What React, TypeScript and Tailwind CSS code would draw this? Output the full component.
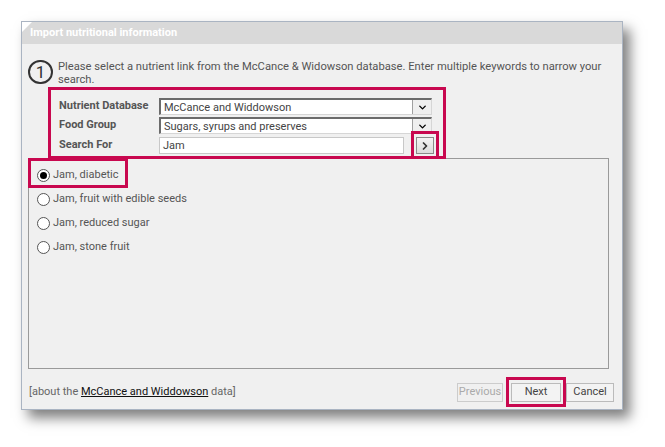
import { ChevronDown, ChevronRight } from "lucide-react";

const items = [
  "Jam, diabetic",
  "Jam, fruit with edible seeds",
  "Jam, reduced sugar",
  "Jam, stone fruit",
];

const SelectBox = ({ value }: { value: string }) => (
  <div className="flex h-[17px] w-[273px] border-l-2 border-t-2 border-b border-r border-l-[#6b6b6b] border-t-[#6b6b6b] border-b-[#d6d6d6] border-r-[#d6d6d6] bg-white">
    <span className="flex-1 truncate pl-[3px] leading-[15px] text-[#444]">{value}</span>
    <span className="flex w-[19px] items-center justify-center border-l border-[#a0a0a0] bg-[#efefef]">
      <ChevronDown className="h-[11px] w-[11px] text-black" strokeWidth={3} />
    </span>
  </div>
);

export default function App() {
  return (
    <div className="min-h-screen bg-white pl-[21px] pt-[21px] font-['Roboto',sans-serif] text-[11px]">
      <div className="relative flex h-[389px] w-[602px] flex-col border border-[#aab4c2] bg-[#f0f0f0] shadow-[7px_8px_12px_rgba(0,0,0,0.5)]">
        <div className="absolute left-0 top-0 h-0 w-0 border-l-[5px] border-t-[5px] border-l-white border-t-white border-r-[5px] border-b-[5px] border-r-transparent border-b-transparent" />
        <div className="h-[22px] bg-[#d9d9d9] pl-[8px] font-bold leading-[22px] text-white">Import nutritional information</div>

        <div className="flex flex-1 flex-col px-[6px]">
          <div className="mt-[16px] flex items-start">
            <div className="flex h-[24px] w-[25px] shrink-0 items-center justify-center rounded-full border-2 border-[#333] text-[17px] leading-none text-[#333]">1</div>
            <p className="ml-[5px] pr-[8px] text-[11.2px] leading-[13px] text-[#555]">
              Please select a nutrient link from the McCance &amp; Widowson database. Enter multiple keywords to narrow your search.
            </p>
          </div>

          <div className="relative z-10 ml-[20px] mt-[1px] flex h-[72px] w-[398px] flex-col gap-[2px] border-[3px] border-[#c8084f] pl-[8px] pt-[8px]">
            <div className="flex items-center">
              <span className="w-[100px] font-bold text-[#555]">Nutrient Database</span>
              <SelectBox value="McCance and Widdowson" />
            </div>
            <div className="flex items-center">
              <span className="w-[100px] font-bold text-[#555]">Food Group</span>
              <SelectBox value="Sugars, syrups and preserves" />
            </div>
            <div className="mt-[1px] flex items-center">
              <span className="w-[100px] font-bold text-[#555]">Search For</span>
              <div className="h-[17px] w-[245px] border border-[#c8c8c8] bg-white pl-[3px] leading-[15px] text-[#444]">Jam</div>
              <div className="relative ml-[12px]">
                <div className="flex h-[17px] w-[18px] items-center justify-center border border-[#8a8a8a] bg-gradient-to-b from-[#f4f4f4] to-[#dcdcdc]">
                  <ChevronRight className="h-[12px] w-[12px] text-[#333]" strokeWidth={3.5} />
                </div>
                <div className="absolute -bottom-[5px] -left-[5px] -right-[5px] -top-[6px] border-[3px] border-[#c8084f]" />
              </div>
            </div>
          </div>

          <div className="relative -mt-[1px] h-[211px] w-[581px] border border-[#9a9a9a] pl-[8px] pt-[4px]">
            {items.map((item, i) => (
              <div key={item} className="flex h-[24px] items-center">
                <span className="flex h-[13px] w-[13px] items-center justify-center rounded-full border border-[#555] bg-white">
                  {i === 0 && <span className="h-[7px] w-[7px] rounded-full bg-black" />}
                </span>
                <span className="ml-[3px] text-[#555]">{item}</span>
              </div>
            ))}
            <div className="absolute -left-[1px] -top-[1px] h-[30px] w-[100px] border-[3px] border-[#c8084f]" />
          </div>

          <div className="flex flex-1 items-center justify-between pl-[1px] pr-[2px] pt-[7px]">
            <span className="text-[#666]">
              [about the <span className="text-[#111] underline">McCance and Widdowson</span> data]
            </span>
            <div className="flex items-center">
              <button className="h-[19px] w-[46px] border border-[#ccc] bg-[#f0f0f0] text-[11px] text-[#aaa]">Previous</button>
              <div className="relative ml-[8px]">
                <button className="h-[19px] w-[50px] border border-[#bbb] bg-[#f3f3f3] text-[11px] text-[#444]">Next</button>
                <div className="absolute -bottom-[5px] -left-[5px] -right-[5px] -top-[6px] border-[3px] border-[#c8084f]" />
              </div>
              <button className="ml-[5px] h-[19px] w-[48px] border border-[#bbb] bg-[#f3f3f3] text-[11px] text-[#444]">Cancel</button>
            </div>
          </div>
        </div>
      </div>
    </div>
  );
}
